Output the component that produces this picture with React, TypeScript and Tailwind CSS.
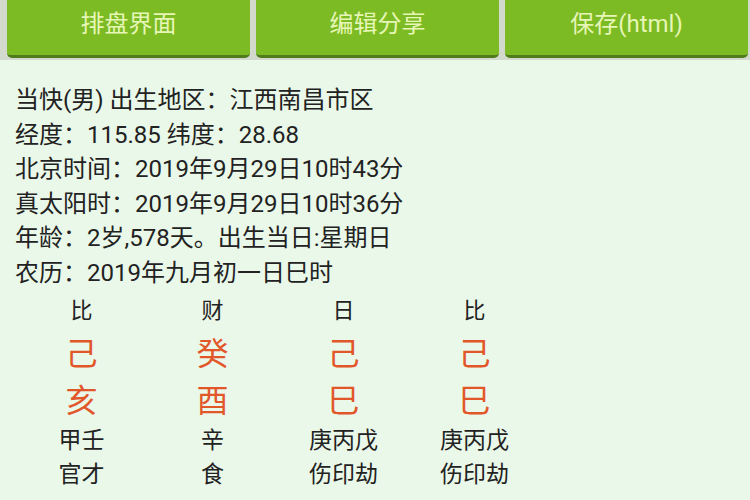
import React from "react";

const font = { fontFamily: 'Roboto, "Noto Sans CJK SC", sans-serif' };

const lines = [
  "当快(男) 出生地区：江西南昌市区",
  "经度：115.85 纬度：28.68",
  "北京时间：2019年9月29日10时43分",
  "真太阳时：2019年9月29日10时36分",
  "年龄：2岁,578天。出生当日:星期日",
  "农历：2019年九月初一日巳时",
];

const pillars = [
  { god: "比", stem: "己", branch: "亥", hidden: "甲壬", gods: "官才" },
  { god: "财", stem: "癸", branch: "酉", hidden: "辛", gods: "食" },
  { god: "日", stem: "己", branch: "巳", hidden: "庚丙戊", gods: "伤印劫" },
  { god: "比", stem: "己", branch: "巳", hidden: "庚丙戊", gods: "伤印劫" },
];

export default function App() {
  return (
    <div className="w-[750px] h-[500px] overflow-hidden bg-[#eaf8e9] text-[#222]" style={font}>
      <div className="h-[60px] flex gap-[6px] pl-[7px] pr-[2px] bg-[#d3dacd]">
        {["排盘界面", "编辑分享", "保存(html)"].map((t) => (
          <div
            key={t}
            className="flex-1 h-[58px] bg-[#7dbb24] rounded-b-[5px] border-b-[3px] border-[#4e7b1b] flex items-center justify-center pb-[8px] text-[24px] text-[#e6f6b6]"
          >
            {t}
          </div>
        ))}
      </div>
      <div className="pt-[23px] pl-[15px]">
        {lines.map((l) => (
          <div key={l} className="text-[24px] leading-[34.6px] whitespace-nowrap">
            {l}
          </div>
        ))}
      </div>
      <div className="flex pl-[16px]">
        {pillars.map((p, i) => (
          <div key={i} className="w-[131px] flex flex-col items-center">
            <div className="h-[40px] flex items-center text-[22px]">{p.god}</div>
            <div className="h-[46px] flex items-center text-[32px] text-[#e2572a]">{p.stem}</div>
            <div className="h-[48px] flex items-center text-[32px] text-[#e2572a]">{p.branch}</div>
            <div className="h-[34px] flex items-center text-[23px]">{p.hidden}</div>
            <div className="h-[34px] flex items-center text-[23px]">{p.gods}</div>
          </div>
        ))}
      </div>
    </div>
  );
}
